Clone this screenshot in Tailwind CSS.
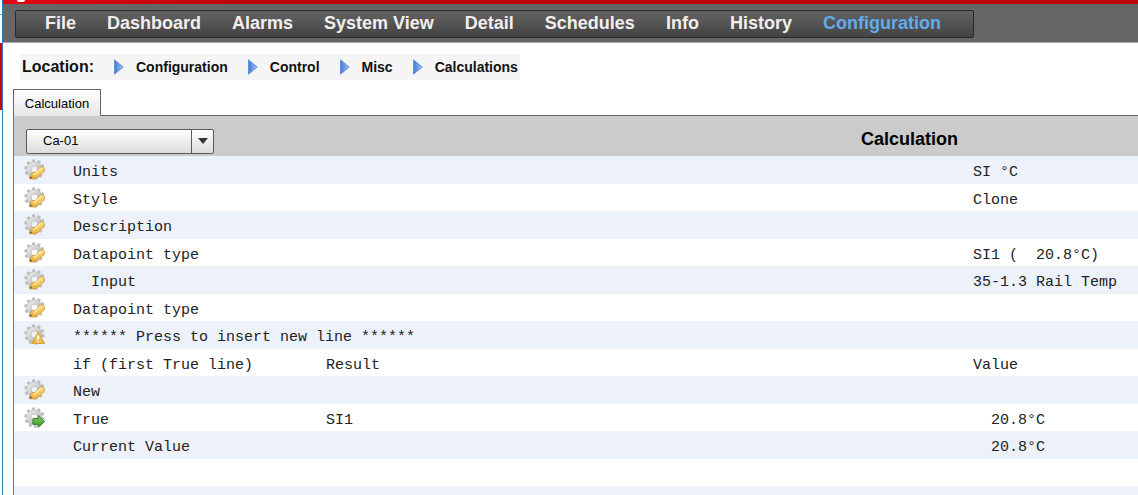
<!DOCTYPE html>
<html lang="en">
<head>
  <meta charset="UTF-8" />
  <meta name="viewport" content="width=device-width, initial-scale=1.0" />
  <title>Configuration - Calculations</title>
  <script src="https://cdn.jsdelivr.net/npm/@tailwindcss/browser@4"></script>
</head>
<body class="flex h-screen overflow-hidden bg-white font-['Liberation_Sans',Arial,sans-serif] text-black">

  <!-- Shared icon shapes -->
  <svg class="absolute size-0">
    <defs>
      <linearGradient id="silver" x1="0" y1="0" x2="1" y2="1">
        <stop offset="0" stop-color="#e6e6e6" />
        <stop offset="1" stop-color="#b4b4b4" />
      </linearGradient>
      <linearGradient id="gold" x1="0" y1="0" x2="0" y2="1">
        <stop offset="0" stop-color="#fbe38a" />
        <stop offset="1" stop-color="#e9b13c" />
      </linearGradient>
      <linearGradient id="green" x1="0" y1="0" x2="0" y2="1">
        <stop offset="0" stop-color="#8fd06f" />
        <stop offset="1" stop-color="#3a8f2c" />
      </linearGradient>
      <linearGradient id="blue" x1="0" y1="0" x2="1" y2="0">
        <stop offset="0" stop-color="#3f78d6" />
        <stop offset="1" stop-color="#a5c8f5" />
      </linearGradient>
    </defs>
    <symbol id="gear" viewBox="0 0 20 20">
      <circle cx="10" cy="10" r="8.4" fill="none" stroke="#bdbdbd" stroke-width="2.6" stroke-dasharray="2.9 2.378" />
      <circle cx="10" cy="10" r="5.3" fill="none" stroke="#b8b8b8" stroke-width="4.8" />
      <circle cx="10" cy="10" r="5.3" fill="none" stroke="url(#silver)" stroke-width="3.8" />
    </symbol>
    <symbol id="edit" viewBox="0 0 20 20">
      <use href="#gear" />
      <path d="M5.5 18.8l1.2-5 2.2-1.2 1.6.6 4.8-5.4 2.4-.6 1.8 2-.4 2.6-6 6-3.8 1.2z" fill="url(#gold)" stroke="#cf9638" stroke-width=".8" />
      <path d="M5.5 18.8l.6-2.6 2 2z" fill="#8a5a22" />
      <path d="M9.4 15.2l6.8-6.4" stroke="#fff0b0" stroke-width="1.2" />
    </symbol>
    <symbol id="insert" viewBox="0 0 20 20">
      <use href="#gear" />
      <path d="M13.5 7.8l6 10.8h-12z" fill="url(#gold)" stroke="#d9a236" stroke-width="1" stroke-linejoin="round" />
      <path d="M13.5 11.5v3.6M13.5 16.2v1.3" stroke="#fff" stroke-width="1.5" />
    </symbol>
    <symbol id="goto" viewBox="0 0 20 20">
      <use href="#gear" />
      <path d="M8.5 11h5V8l6 6-6 5.4v-3h-5z" fill="url(#green)" stroke="#2f7a28" stroke-width=".9" stroke-linejoin="round" />
    </symbol>
    <symbol id="arrow" viewBox="0 0 10 16">
      <path d="M.5.8L9.3 8 .5 15.2z" fill="url(#blue)" stroke="#5b8ad6" stroke-width=".8" />
    </symbol>
  </svg>

  <!-- Edge of the window behind -->
  <div class="flex w-[3px] shrink-0 flex-col border-r border-[#2f7fb5]">
    <div class="h-[15px] border-b border-gray-400"></div>
    <div class="mt-7 h-[67px] bg-[#cc0512]"></div>
  </div>

  <div class="flex min-w-0 flex-1 flex-col">
    <header class="h-1 shrink-0 bg-linear-to-r from-[#e30613] to-[#bf060c] to-20% pl-[14px]">
      <div class="h-[2px] w-2 rounded-b-full bg-white"></div>
    </header>

    <nav class="flex shrink-0 border-b border-[#a8a8a8] bg-[#666] px-3 pt-[6px] pb-1">
      <div class="flex h-7 items-center gap-[31px] rounded-xs border border-[#292929] bg-linear-to-b from-[#636363] to-[#434343] pr-8 pb-[2px] pl-[29px] text-[18px] leading-5 font-bold whitespace-nowrap text-[#f3eeee]">
        <a href="#">File</a>
        <a href="#">Dashboard</a>
        <a href="#">Alarms</a>
        <a href="#">System View</a>
        <a href="#">Detail</a>
        <a href="#">Schedules</a>
        <a href="#">Info</a>
        <a href="#">History</a>
        <a href="#" class="text-[#62acee]">Configuration</a>
      </div>
    </nav>

    <div class="flex shrink-0 pt-[11px] pl-[17px]">
      <div class="flex h-[26px] items-center bg-[#f5f5f5] px-[2px] text-[14px] font-bold text-[#111]">
        <span class="mr-5 text-[16px]">Location:</span>
        <svg class="mr-3 h-4 w-[10px]"><use href="#arrow" /></svg>
        <a href="#" class="mr-5">Configuration</a>
        <svg class="mr-3 h-4 w-[10px]"><use href="#arrow" /></svg>
        <a href="#" class="mr-5">Control</a>
        <svg class="mr-3 h-4 w-[10px]"><use href="#arrow" /></svg>
        <a href="#" class="mr-5">Misc</a>
        <svg class="mr-3 h-4 w-[10px]"><use href="#arrow" /></svg>
        <a href="#">Calculations</a>
      </div>
    </div>

    <div class="mt-[9px] flex shrink-0 pl-[10px]">
      <button class="h-[27px] w-[88px] border border-b-0 border-[#666] bg-linear-to-b from-white to-[#e6e6e6] pt-[2px] text-[13px] leading-5">Calculation</button>
      <div class="flex-1 border-b border-[#666]"></div>
    </div>

    <main class="ml-[10px] min-h-0 flex-1 overflow-hidden border-l border-[#777]">
      <div class="flex h-10 items-center justify-between bg-[#cbcbcb] pr-[180px] pl-3">
        <div class="relative mt-[10px]">
          <select aria-label="Calculation" class="block h-[25px] w-[188px] appearance-none rounded-xs border border-[#5a5a5a] bg-linear-to-b from-white to-[#dcdcdc] pl-4 text-[13px]">
            <option>Ca-01</option>
          </select>
          <div class="pointer-events-none absolute inset-y-0 right-0 flex w-[23px] items-center justify-center border-l border-[#5a5a5a]">
            <svg class="h-[6px] w-[10px]" viewBox="0 0 10 6"><path d="M0 0h10L5 6z" fill="#333" /></svg>
          </div>
        </div>
        <h1 class="mt-[6px] text-[18px] leading-5 font-bold">Calculation</h1>
      </div>

      <table class="w-full table-fixed text-left font-['Liberation_Mono','Courier_New',monospace] text-[15px] leading-5 text-[#222]">
        <colgroup>
          <col class="w-[59px]" />
          <col class="w-[253px]" />
          <col />
          <col class="w-[165px]" />
        </colgroup>
        <tbody id="rows"></tbody>
      </table>
    </main>
  </div>

  <script>
    // [icon, name, result, value] - leading spaces are kept as indent
    const rows = [
      ['edit', 'Units', '', 'SI °C'],
      ['edit', 'Style', '', 'Clone'],
      ['edit', 'Description', '', ''],
      ['edit', 'Datapoint type', '', 'SI1 (  20.8°C)'],
      ['edit', '  Input', '', '35-1.3 Rail Temp'],
      ['edit', 'Datapoint type', '', ''],
      ['insert', '****** Press to insert new line ******', '', ''],
      ['', 'if (first True line)', 'Result', 'Value'],
      ['edit', 'New', '', ''],
      ['goto', 'True', 'SI1', '  20.8°C'],
      ['', 'Current Value', '', '  20.8°C'],
      ['', '', '', ''],
      ['', '', '', '']
    ];

    document.getElementById('rows').innerHTML = rows.map(([icon, name, result, value]) => `
      <tr class="odd:h-[28px] odd:bg-[#edf1fa] even:h-[27px]">
        <td class="p-0 pl-[10px] align-top">
          ${icon ? `<button aria-label="${icon} ${name.trim()}" class="mt-[3px] block size-[21px]"><svg class="size-full"><use href="#${icon}" /></svg></button>` : ''}
        </td>
        <td class="p-0 pt-[6px] whitespace-pre">${name}</td>
        <td class="p-0 pt-[6px] whitespace-pre">${result}</td>
        <td class="p-0 pt-[6px] whitespace-pre">${value}</td>
      </tr>
    `).join('');
  </script>
</body>
</html>
